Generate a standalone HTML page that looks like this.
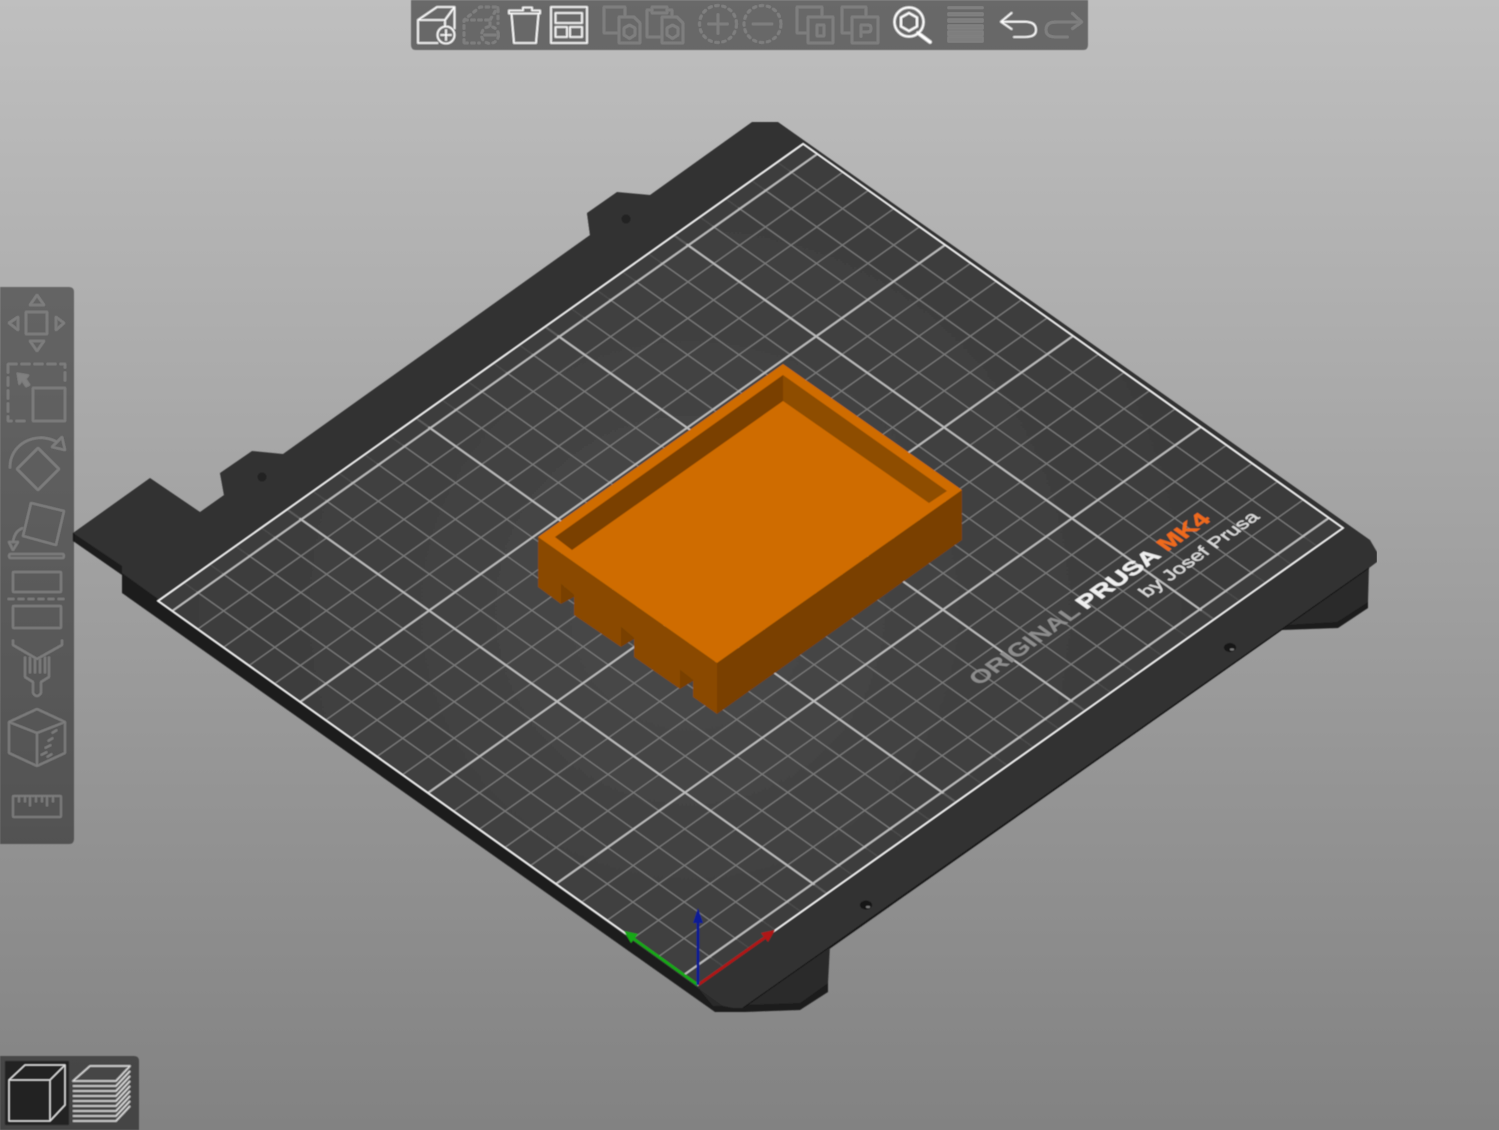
<!DOCTYPE html>
<html><head><meta charset="utf-8"><style>
html,body{margin:0;padding:0;width:1499px;height:1130px;overflow:hidden;background:#888}
svg{display:block}
text{font-family:"Liberation Sans",sans-serif;text-rendering:geometricPrecision}
</style></head><body>
<svg width="1499" height="1130" viewBox="0 0 1499 1130" xmlns="http://www.w3.org/2000/svg">
<defs>
<linearGradient id="bg" x1="0" y1="0" x2="0" y2="1"><stop offset="0" stop-color="#bfbfbf"/><stop offset="1" stop-color="#828282"/></linearGradient>
<radialGradient id="sheet" gradientUnits="userSpaceOnUse" cx="690" cy="610" r="520"><stop offset="0" stop-color="#494949"/><stop offset="1" stop-color="#3b3b3b"/></radialGradient>
<filter id="soft" x="0" y="0" width="100%" height="100%"><feGaussianBlur stdDeviation="0.45"/></filter>
</defs>
<rect width="1499" height="1130" fill="url(#bg)"/>
<g filter="url(#soft)">

<!-- plate sides and feet -->
<path d="M73 533V541L122 575V593L715 1012L745 1012L800 1010L828 992V950L1282 630L1338 628L1368 608V568L1290 620Z" fill="#1f1f1f"/>
<path d="M828 983L800 1003L713 1006L700 990L830 945ZM1368 602L1337 622L1283 625L1280 615L1369 565Z" fill="#2c2c2c"/>
<path d="M220 473L224 495L228 490ZM587 213L590 235L594 230Z" fill="#222"/>
<!-- plate top -->
<path d="M73 533L150 478L200 512L224 495L220 473L252 451L283 454L590 235L587 213L617 192L650 195L752 122H778L1370 540L1377 552V562L1369 568L743 1008H733L723 1006L122 573V566Z" fill="#333"/>
<path d="M1369 568L743 1008" stroke="#111" stroke-width="1" fill="none"/>
<!-- holes -->
<ellipse cx="626" cy="219" rx="4.500" ry="4.500" fill="#202020"/><ellipse cx="262" cy="477" rx="4.500" ry="4.500" fill="#202020"/>
<ellipse cx="1230" cy="647.500" rx="6" ry="4.500" fill="#151515"/><ellipse cx="866" cy="905" rx="6" ry="4.500" fill="#151515"/>
<ellipse cx="1232" cy="649.500" rx="2.200" ry="1.200" fill="#777"/><ellipse cx="868" cy="907" rx="2.200" ry="1.200" fill="#777"/>

<!-- sheet and grid -->
<path d="M698 985L1343 528L803 146L158 601Z" fill="url(#sheet)"/>
<g transform="matrix(2.58 -1.828 -2.571 -1.829 698 985)" fill="none">
<path vector-effect="non-scaling-stroke" stroke="#7c7c7c" stroke-width="1.200" d="M10 0V210M20 0V210M30 0V210M40 0V210M60 0V210M70 0V210M80 0V210M90 0V210M110 0V210M120 0V210M130 0V210M140 0V210M160 0V210M170 0V210M180 0V210M190 0V210M210 0V210M220 0V210M230 0V210M240 0V210M0 15.45H250M0 25.4H250M0 35.35H250M0 45.3H250M0 65.2H250M0 75.15H250M0 85.1H250M0 95.05H250M0 114.95H250M0 124.9H250M0 134.85H250M0 144.8H250M0 164.7H250M0 174.65H250M0 184.6H250M0 194.55H250"/>
<path vector-effect="non-scaling-stroke" stroke="#bcbcbc" stroke-width="1.900" d="M50 0V210M100 0V210M150 0V210M200 0V210M0 5.5H250M0 55.25H250M0 105H250M0 154.75H250M0 204.5H250"/>
<path d="M0 0H250V4.9H0ZM0 205.1H250V210H0Z" fill="#3d3d3d" fill-opacity=".75"/>
<path vector-effect="non-scaling-stroke" stroke="#f4f4f4" stroke-width="1.600" d="M0 0H250V210H0Z"/>
</g>

<!-- logo -->
<g>
<text transform="matrix(.816 -.578 .815 .579 979 686)" font-size="22" font-weight="700" fill="#8e8e8e" textLength="126" lengthAdjust="spacingAndGlyphs">ORIGINAL</text>
<text transform="matrix(.816 -.578 .815 .579 1086 610)" font-size="22" font-weight="700" fill="#efefef" stroke="#efefef" stroke-width=".5" textLength="93" lengthAdjust="spacingAndGlyphs">PRUSA</text>
<text transform="matrix(.816 -.578 .815 .579 1167 552)" font-size="22" font-weight="700" fill="#ee6a1c" stroke="#ee6a1c" stroke-width=".5" textLength="55" lengthAdjust="spacingAndGlyphs">MK4</text>
<text transform="matrix(.816 -.578 .815 .579 1147 598)" font-size="18" fill="#d8d8d8" stroke="#d8d8d8" stroke-width=".4" textLength="139" lengthAdjust="spacingAndGlyphs">by Josef Prusa</text>
</g>

<!-- axes -->
<g fill="none" stroke-width="2.800">
<path d="M698 985L627 934" stroke="#14a914"/>
<path d="M698 985L770 934" stroke="#b01414"/>
<path d="M698 985V920" stroke="#0b1d96"/>
</g>
<path d="M624 931L638 934L631 943Z" fill="#14a914"/>
<path d="M775 930L761 933L768 942Z" fill="#b01414"/>
<path d="M698 908L703 923H693Z" fill="#0b1d96"/>

<!-- printed box -->
<path d="M538 537L717 663V714L693 697V680L680 670V689L634 657V638L621 627V647L574 615V595L561 584V604L538 587Z" fill="#8a4a00"/>
<path d="M561 584L561 604L574 597V595ZM621 627V647L634 639V638ZM680 670V689L693 681V680Z" fill="#793f00"/>
<path d="M717 663L962 490V540L717 714Z" fill="#7a4000"/>
<path d="M783 364L962 490L717 663L538 537Z" fill="#cf6c00"/>
<path d="M783 375V401L572 550L555 537Z" fill="#7a4000"/>
<path d="M783 375L947 491L929 503L783 401Z" fill="#8e4d00"/>

<!-- top toolbar -->
<path d="M411 0H1088V45Q1088 50 1083 50H416Q411 50 411 45Z" fill="#000" fill-opacity=".45"/>
<g fill="none" stroke="#fff" stroke-width="1.600" stroke-linejoin="round">
<path d="M438 43H418V20L437 7H454.5V29M418 20H445V27M445 20L454.5 7"/>
<circle cx="446" cy="35" r="8.5"/><path d="M446 29.5V40.5M440.500 35H451.500"/>
<path d="M509 13.500H540V10.500H532V7.500H523V10.500H509ZM511.500 14L514 43H536L538.500 14"/>
<path d="M551 7H587V43H551ZM555.500 13H582V23H555.500ZM555.500 27H567V37H555.500ZM570 27H582V37H570Z"/>
<circle cx="909" cy="22" r="14.500" stroke-width="2"/><path d="M909 13L917 17.500V26.500L909 31L901 26.500V17.500Z" stroke-width="2"/>
<path d="M918 33L930 42" stroke-width="3.200" stroke-linecap="round"/>
<path d="M1011.500 13L1001 21.700L1011.500 29M1001 21.700H1025Q1036 22 1036 30Q1036 37 1025 37H1014" stroke-linecap="round"/>
</g>
<g fill="none" stroke="#808080" stroke-width="1.400" stroke-linejoin="round">
<g stroke-dasharray="4 3">
<path d="M464 43V20L480 7H498V24M464 20H490V26M490 20L498 7M464 43H480"/>
<ellipse cx="490" cy="35" rx="8.500" ry="8.500"/>
<circle cx="718" cy="24" r="18.500"/><circle cx="762.500" cy="24" r="18.500"/>
</g>
<path d="M484 35H496M718 14V34M708 24H728M752.500 24H772.500"/>
<path d="M619 33H604V7H625V17M619 17H634L640 23V43H619ZM629.500 25L635 28V35L629.500 38.500L624 35V28Z"/>
<path d="M662 37H647V10H652M667 10H672V17M652 7H667V13H652ZM662 17H677L683 23V43H662ZM672.500 25L678 28V35L672.500 38.500L667 35V28Z"/>
<path d="M808 33H797V7H822V17M808 17H833V43H808ZM817 25H824V36H817Z"/>
<path d="M852 33H842V7H866V17M852 17H878V43H852ZM861 37V25H868Q871 25 871 28V29Q871 32 868 32H861"/>
<path d="M1072 13L1081.700 22L1072 29M1081.700 22H1056Q1046 22 1046 30Q1046 37 1056 37H1068"/>
</g>
<g fill="#7e7e7e">
<rect x="948" y="7" width="35" height="1.500"/><rect x="948" y="13" width="35" height="2.500"/><rect x="948" y="19" width="35" height="3"/><rect x="948" y="25" width="35" height="4"/><rect x="948" y="31" width="35" height="4.500"/><rect x="948" y="37" width="35" height="5"/>
</g>

<!-- left toolbar -->
<path d="M0 287H69Q74 287 74 292V839Q74 844 69 844H0Z" fill="#000" fill-opacity=".43"/>
<g fill="none" stroke="#808080" stroke-width="1.400" stroke-linejoin="round">
<path d="M37 295L30 305H44ZM26 312H47V334H26ZM9 323L18 317V330ZM64 323L56 317V330ZM30 341H44L37 351Z"/>
<path d="M8 364H65V384M8 364V421H28" stroke-dasharray="9 4"/>
<path d="M33 388H65V421H33Z"/>
<path d="M10 468C9 445 35 430 57 442M52 447L62 437L65 450ZM38 448L59 469L38 490L17 469Z"/>
<path d="M31 503L64 511L56 545L23 536ZM23 528C17 530 14 535 13 542M9 542H18L13 550ZM10 554H63Q65 556 63 558H10Q8 556 10 554Z"/>
<path d="M14 572H60Q61 572 61 573V591Q61 592 60 592H14Q13 592 13 591V573Q13 572 14 572ZM14 606H60Q61 606 61 607V627Q61 628 60 628H14Q13 628 13 627V607Q13 606 14 606Z"/>
<path d="M8 599H65" stroke-dasharray="6 4"/>
<path d="M13 640V645L37 659L62 645V640M25 657V677L33 682V693Q37 699 41 693V682L49 677V657M30 657V673M35 659V673M40 659V673M45 657V673"/>
<path d="M37 709L65 722V753L37 766L9 753V722ZM9 722L37 733L65 722M37 733V766M52 733L57 730M48 741L53 738M45 748L51 745M41 755L47 752M47 757L52 754"/>
<path d="M14 796H60Q61 796 61 797V816Q61 817 60 817H14Q13 817 13 816V797Q13 796 14 796ZM19 796V802M25 796V802M30 796V806M36 796V802M42 796V802M47 796V806M53 796V802"/>
</g>
<path d="M17 373L29 375L26 379L30 385L26 387L22 381L19 385Z" fill="#808080"/>

<!-- bottom view toolbar -->
<path d="M0 1056H134Q139 1056 139 1061V1130H0Z" fill="#000" fill-opacity=".47"/>
<rect x="5" y="1061" width="64" height="64" fill="#232323"/>
<g fill="none" stroke="#dcdcdc" stroke-width="1.500" stroke-linejoin="round">
<path d="M9 1080H50V1121H9ZM9 1080L25 1065H65V1105L50 1121M50 1080L65 1065"/>
<path d="M73 1081L90 1066H130L116 1081Z"/>
<path d="M73 1086H116L130 1071M73 1091H116L130 1076M73 1096H116L130 1081M73 1101H116L130 1086M73 1106H116L130 1091M73 1111H116L130 1096M73 1116H116L130 1101M73 1121H116L130 1106" stroke-width="1.600"/>
</g>
</g>
</svg>
</body></html>
